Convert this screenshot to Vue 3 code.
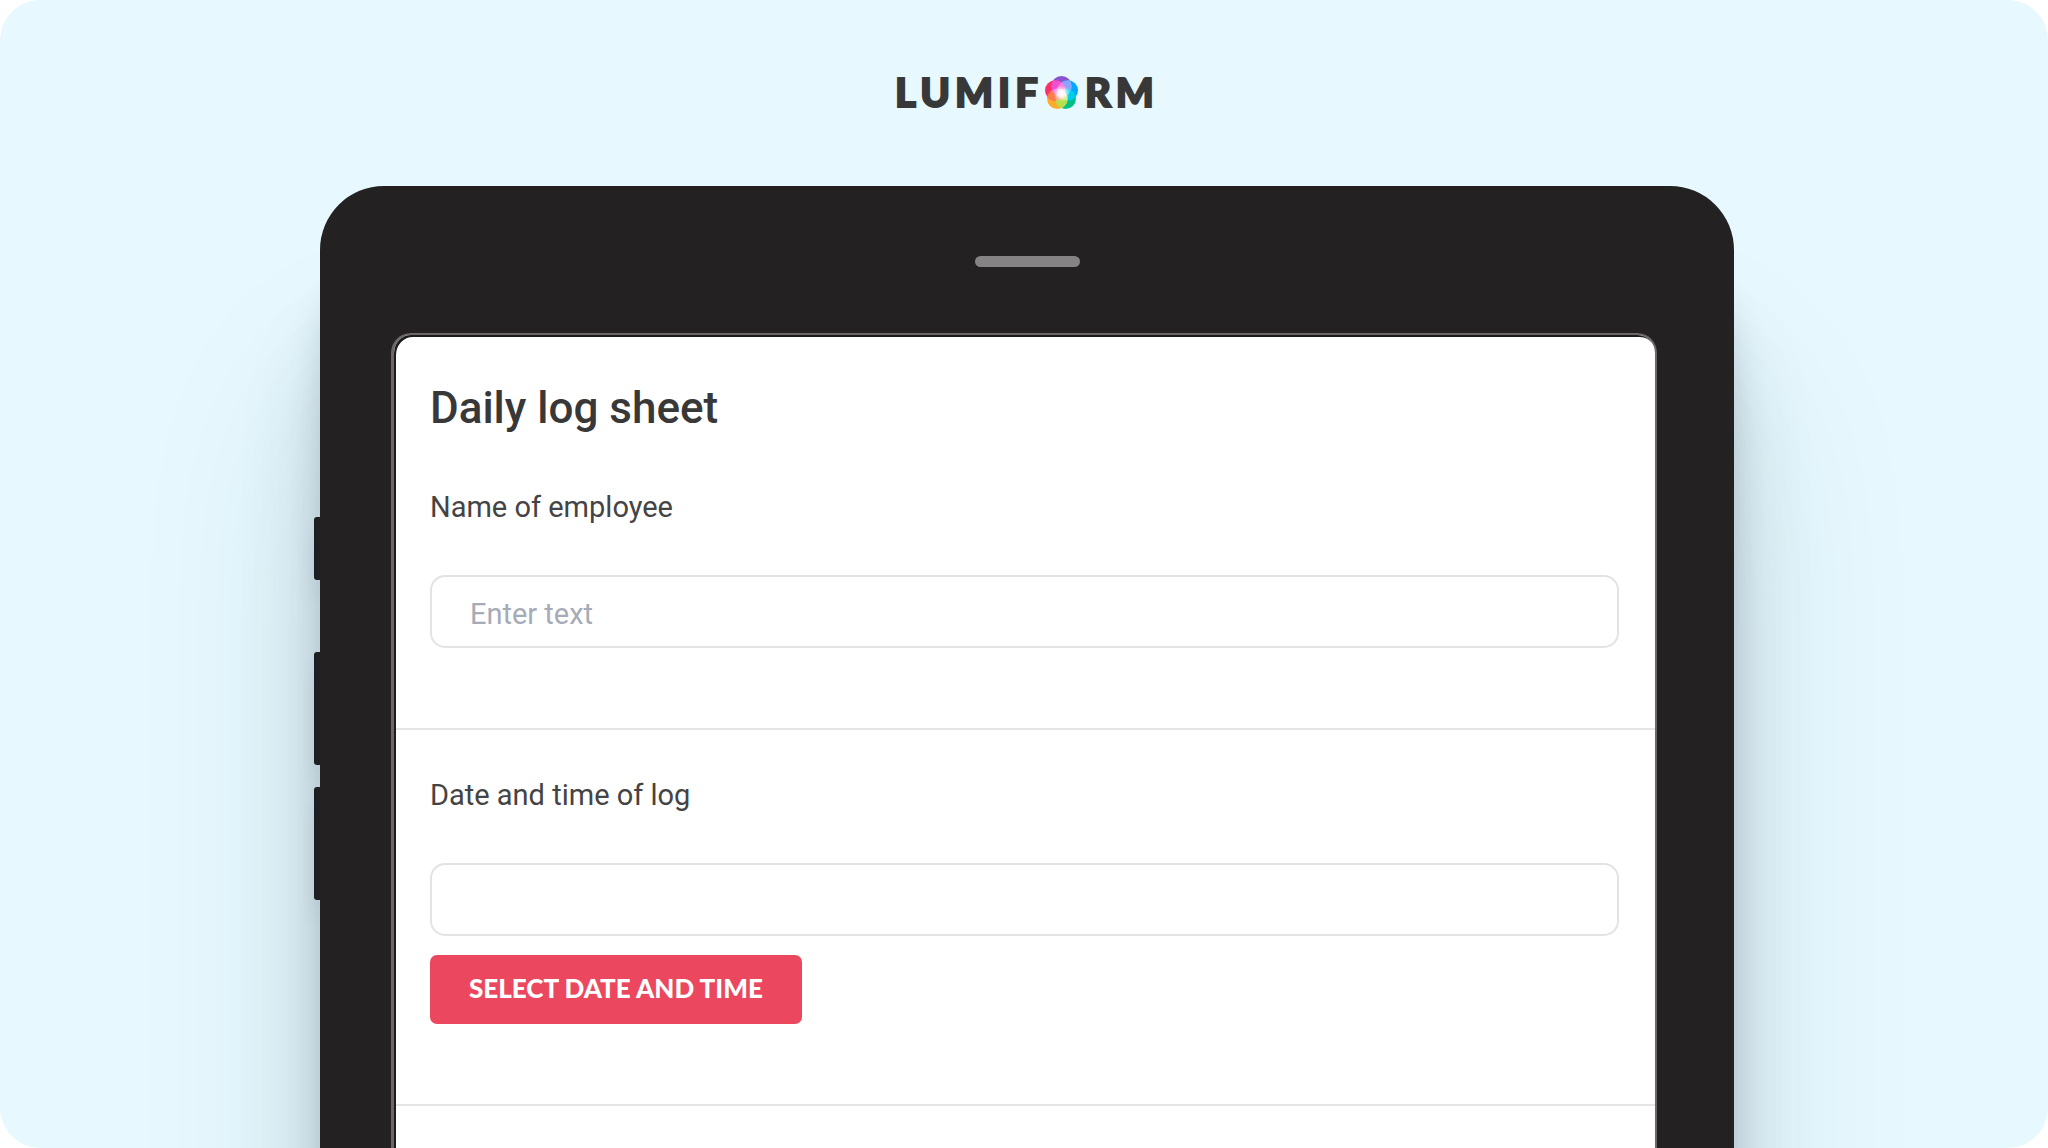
<script setup>
import { ref } from 'vue'

const employee = ref('')
const loggedAt = ref('')

const petals = [
  { id: 'top', cx: 16, cy: 10, fill: '#8b52cf', overlap: '#8aa4ff' },
  { id: 'right', cx: 22, cy: 14, fill: '#00a9ff', overlap: '#00cdee' },
  { id: 'lower-right', cx: 20, cy: 22, fill: '#00c088', overlap: '#b4e04e' },
  { id: 'lower-left', cx: 12, cy: 22, fill: '#ffab2e', overlap: '#ff7d4d' },
  { id: 'left', cx: 10, cy: 14, fill: '#ff2f69', overlap: '#f04fd2' },
]
const next = (i, step) => petals[(i + step) % petals.length]

function selectNow() {
  loggedAt.value = new Date().toLocaleString()
}
</script>

<template>
  <main class="page">
    <header class="logo" aria-label="Lumiform">
      <span>LUMIF</span>
      <svg class="flower" viewBox="0 0 32 32" aria-hidden="true">
        <defs>
          <clipPath v-for="p in petals" :id="`petal-${p.id}`" :key="p.id">
            <circle :cx="p.cx" :cy="p.cy" r="10" />
          </clipPath>
          <radialGradient id="glow">
            <stop offset="0" stop-color="#fff" />
            <stop offset="0.3" stop-color="#fff" stop-opacity="0.8" />
            <stop offset="1" stop-color="#fff" stop-opacity="0" />
          </radialGradient>
        </defs>
        <circle v-for="p in petals" :key="p.id" :cx="p.cx" :cy="p.cy" r="10" :fill="p.fill" />
        <circle
          v-for="(p, i) in petals" :key="`near-${p.id}`"
          :cx="next(i, 1).cx" :cy="next(i, 1).cy" r="10"
          :fill="p.overlap" :clip-path="`url(#petal-${p.id})`"
        />
        <circle
          v-for="(p, i) in petals" :key="`far-${p.id}`"
          :cx="next(i, 2).cx" :cy="next(i, 2).cy" r="10"
          fill="#fff" fill-opacity="0.28" :clip-path="`url(#petal-${p.id})`"
        />
        <circle cx="16" cy="17" r="8" fill="url(#glow)" />
      </svg>
      <span>RM</span>
    </header>

    <div class="tablet">
      <div class="side-keys" aria-hidden="true">
        <i class="key short"></i>
        <i class="key"></i>
        <i class="key"></i>
      </div>
      <div class="body">
        <div class="speaker"></div>
        <form class="screen" @submit.prevent>
          <section class="block">
            <h1>Daily log sheet</h1>
            <label for="employee">Name of employee</label>
            <input id="employee" v-model="employee" type="text" placeholder="Enter text" />
          </section>
          <section class="block">
            <label for="logged-at">Date and time of log</label>
            <input id="logged-at" v-model="loggedAt" type="text" />
            <button type="button" @click="selectNow">SELECT DATE AND TIME</button>
          </section>
        </form>
      </div>
    </div>
  </main>
</template>

<style>
body {
  margin: 0;
  background: #fff;
}
</style>

<style scoped>
.page {
  box-sizing: border-box;
  min-height: 100vh;
  padding-top: 64px;
  display: flex;
  flex-direction: column;
  align-items: center;
  overflow: hidden;
  border-radius: 40px;
  background: #e7f9ff;
  color: #383838;
  font-family: Roboto, "Noto Sans", sans-serif;
}

.logo {
  display: flex;
  align-items: center;
  height: 56px;
  padding-left: 6px;
  font: 900 40px/56px Lato, sans-serif;
  letter-spacing: 5px;
  -webkit-text-stroke: 2px currentColor;
}

.flower {
  width: 33px;
  height: 33px;
  margin: 0 7px 0 2px;
}

.tablet {
  flex: 1;
  display: flex;
  width: 69.34%;
  margin-top: 66px;
  margin-bottom: -240px;
}

.side-keys {
  display: flex;
  flex-direction: column;
  width: 6px;
  padding-top: 331px;
}

.key {
  height: 113px;
  margin-bottom: 22px;
  border-radius: 3px 0 0 3px;
  background: #232122;
  box-shadow: 0 16px 20px -2px rgba(20, 40, 50, 0.25);
}

.key.short {
  height: 63px;
  margin-bottom: 72px;
}

.body {
  flex: 1;
  display: flex;
  flex-direction: column;
  padding: 70px 77px 0 71px;
  border-radius: 64px 64px 0 0;
  background: #232122;
  position: relative;
  box-shadow:
    0 90px 40px -14px rgba(20, 35, 40, 0.26),
    0 150px 90px -10px rgba(20, 35, 50, 0.2),
    0 200px 200px -6px rgba(20, 35, 60, 0.12);
}

.speaker {
  align-self: center;
  width: 105px;
  height: 11px;
  margin-left: 8px;
  border-radius: 6px;
  background: #858384;
}

.screen {
  flex: 1;
  margin-top: 66px;
  padding-bottom: 240px;
  border: 2px solid #6d6667;
  border-left-width: 3px;
  border-bottom: 0;
  border-radius: 20px 20px 0 0;
  background: #fff;
  box-shadow: inset 2px 2px 0 #1c1a1b;
}

.block {
  display: flex;
  flex-direction: column;
  align-items: flex-start;
  margin-left: 2px;
  padding: 47px 36px 80px 34px;
  border-bottom: 2px solid #e5e5e5;
}

.block:first-child {
  padding-top: 49px;
}

h1 {
  margin: 0 0 57px;
  font-size: 44px;
  line-height: 48px;
  font-weight: 500;
}

label {
  margin-bottom: 50px;
  color: #444;
  font-size: 29px;
  line-height: 36px;
}

input {
  box-sizing: border-box;
  width: 100%;
  height: 73px;
  padding: 4px 38px 0;
  border: 2px solid #e3e3e3;
  border-radius: 15px;
  background: #fff;
  color: inherit;
  font: inherit;
  font-size: 29px;
}

input::placeholder {
  color: #a6abb8;
  opacity: 1;
}

button {
  height: 69px;
  margin-top: 19px;
  padding: 0 39px 4px;
  border: 0;
  border-radius: 7px;
  background: #eb475e;
  color: #fff;
  font: 900 26px/32px Lato, sans-serif;
  cursor: pointer;
}
</style>
